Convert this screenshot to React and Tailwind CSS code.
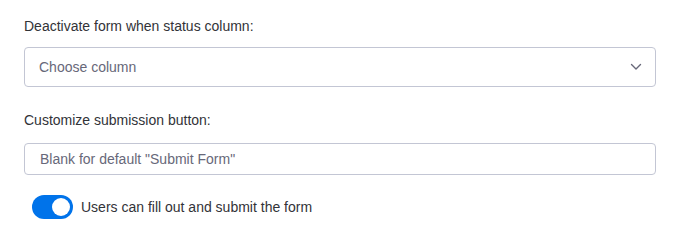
import React from "react";

export default function App() {
  return (
    <div
      className="w-[674px] h-[236px] bg-white px-6 pt-[17px] text-[#323338]"
      style={{ fontFamily: '"Liberation Sans", Arial, sans-serif' }}
    >
      <div className="text-[14px] leading-[18px]">Deactivate form when status column:</div>
      <div className="mt-[12px] h-10 w-[632px] rounded-[4px] border border-[#c3c6d4] flex items-center justify-between pl-[14px] pr-[13px]">
        <span className="text-[14px] text-[#676879]">Choose column</span>
        <svg width="12" height="8" viewBox="0 0 12 8" fill="none">
          <path d="M1.5 1.5 L6 6 L10.5 1.5" stroke="#676879" strokeWidth="1.4" strokeLinecap="round" strokeLinejoin="round" />
        </svg>
      </div>
      <div className="mt-[24px] text-[14px] leading-[18px]">Customize submission button:</div>
      <div className="mt-[14px] h-[32px] w-[632px] rounded-[4px] border border-[#c3c6d4] flex items-center pl-[15px]">
        <span className="text-[14px] text-[#676879]">Blank for default "Submit Form"</span>
      </div>
      <div className="mt-[20px] ml-2 flex items-center gap-2">
        <div className="w-[41px] h-6 rounded-full bg-[#0073ea] flex items-center justify-end pr-[3px]">
          <div className="w-[18px] h-[18px] rounded-full bg-white" />
        </div>
        <span className="text-[14px]">Users can fill out and submit the form</span>
      </div>
    </div>
  );
}
